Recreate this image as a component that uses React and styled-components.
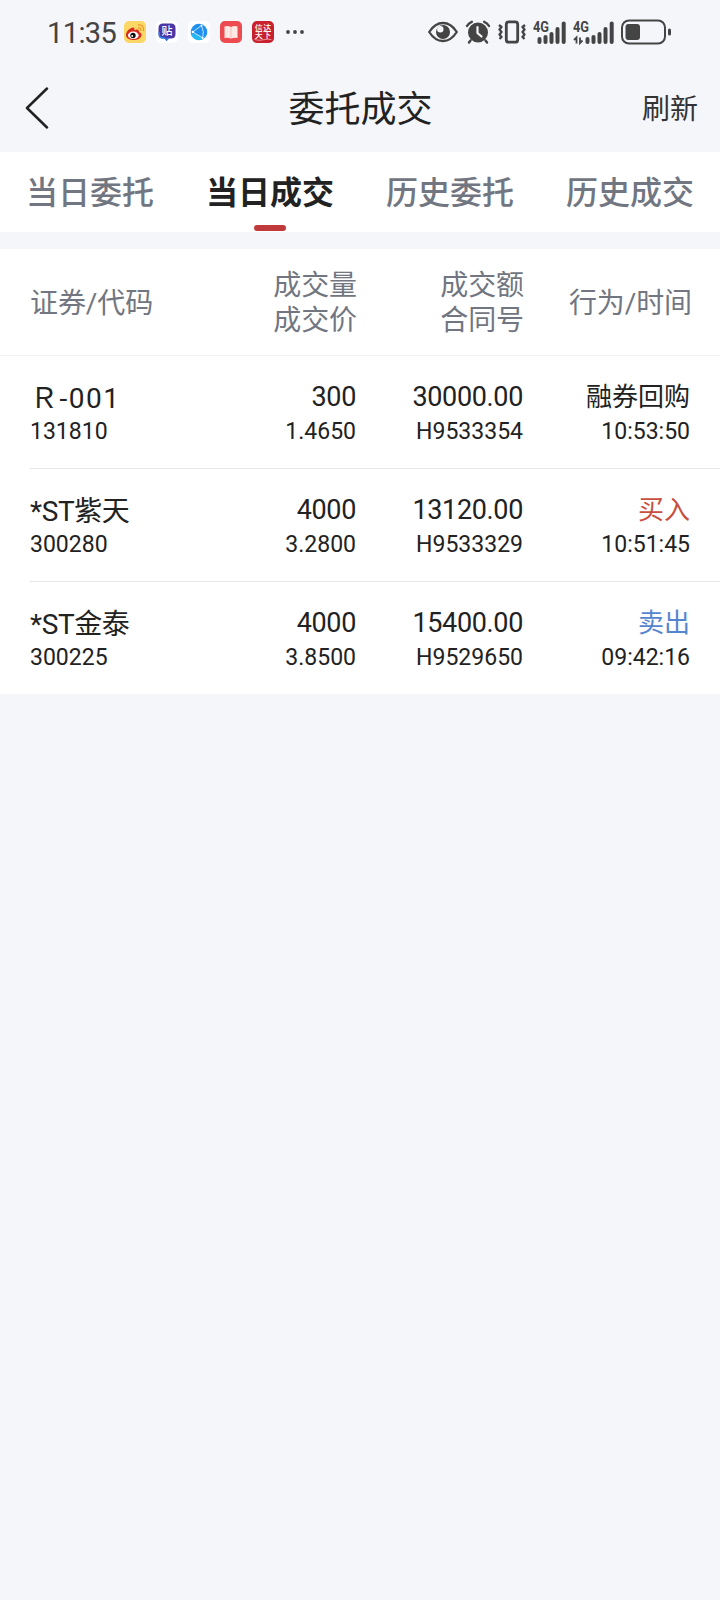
import React, { useState } from 'react';
import styled, { createGlobalStyle } from 'styled-components';


const GlobalStyle = createGlobalStyle`
  * {
    box-sizing: border-box;
  }

  body {
    margin: 0;
    background: #f4f6fa;
    color: #222;
    font-family: Roboto, 'Noto Sans CJK SC', sans-serif;
  }
`;

// Define styled components
const Page = styled.div`
  width: 720px;
  min-height: 1600px;
  background: #f4f6fa;
`;

const StatusBar = styled.div`
  display: flex;
  align-items: center;
  justify-content: space-between;
  height: 64px;
  padding: 0 49px 0 47px;
  color: #444;
`;

const StatusGroup = styled.div`
  display: flex;
  align-items: center;
`;

const Clock = styled.span`
  width: 77px;
  padding-top: 1px;
  font-size: 29px;
  line-height: 64px;
  letter-spacing: -0.6px;
  white-space: nowrap;
`;

const Glyph = styled.svg`
  display: block;
  flex: none;
  margin-right: ${(props) => props.$gap || 0}px;
`;

const NavBar = styled.header`
  display: grid;
  grid-template-columns: 120px 1fr 122px;
  align-items: center;
  height: 88px;
  padding: 0 22px 0 25px;
`;

const BackButton = styled.button`
  display: flex;
  padding: 0;
  border: 0;
  background: none;
`;

const Title = styled.h1`
  height: 88px;
  margin: 0;
  padding-top: 3px;
  font-size: 36px;
  font-weight: 400;
  line-height: 86px;
  text-align: center;
`;

const RefreshButton = styled.button`
  height: 88px;
  padding: 3px 0 0;
  border: 0;
  background: none;
  color: #333;
  font-family: inherit;
  font-size: 28px;
  line-height: 85px;
  text-align: right;
`;

const Tabs = styled.nav`
  display: flex;
  height: 80px;
  margin-bottom: 17px;
  background: #fff;
`;

const Tab = styled.button`
  flex: 1;
  display: flex;
  flex-direction: column;
  align-items: center;
  justify-content: space-between;
  padding: 0 0 1px;
  border: 0;
  background: none;
  color: ${(props) => (props.$active ? '#222' : '#717681')};
  font-family: inherit;
  font-size: 32px;
  font-weight: ${(props) => (props.$active ? 700 : 500)};
  line-height: 73px;

  &::after {
    content: '';
    width: 32px;
    height: 6px;
    border-radius: 3px;
    background: ${(props) => (props.$active ? '#c03a3b' : 'transparent')};
  }
`;

const TabLabel = styled.span`
  height: 73px;
  padding-top: 5px;
`;

const HeadRow = styled.div`
  display: grid;
  grid-template-columns: 160px 167px 167px 1fr;
  align-items: center;
  height: 107px;
  padding: 2px 28px 0 30px;
  border-bottom: 1px solid #f3f3f5;
  background: #fff;
  color: #717681;
  font-size: 28px;
  line-height: 35px;
  letter-spacing: -0.1px;
`;

const List = styled.div`
  background: #fff;
`;

const Row = styled.div`
  display: grid;
  grid-template-columns: 160px 166px 167px 1fr;
  height: ${(props) => (props.$last ? 112 : 113)}px;
  margin-left: 30px;
  padding: 23px 30px 0 0;
  border-bottom: ${(props) => (props.$last ? 'none' : '1px solid #e6e6e8')};
`;

const Cell = styled.div`
  text-align: ${(props) => (props.$left ? 'left' : 'right')};
  white-space: nowrap;
`;

const Name = styled.div`
  font-size: 28px;
  line-height: 39px;
  letter-spacing: ${(props) => props.$spacing}px;
`;

const Amount = styled.div`
  font-size: 27px;
  line-height: 36px;
  letter-spacing: -0.35px;
`;

const Action = styled.div`
  color: ${(props) => props.$color};
  font-size: 26px;
  line-height: 36px;
`;

const Small = styled.div`
  font-size: 23px;
  line-height: ${(props) => (props.$left ? 27 : 34)}px;
`;

const tabs = ['当日委托', '当日成交', '历史委托', '历史成交'];

const actionColors = {
  融券回购: '#222',
  买入: '#c84e3e',
  卖出: '#5386cf',
};

const trades = [
  { name: 'Ｒ-001', spacing: 1.5, code: '131810', volume: '300', price: '1.4650', total: '30000.00', contract: 'H9533354', action: '融券回购', time: '10:53:50' },
  { name: '*ST紫天', spacing: -0.4, code: '300280', volume: '4000', price: '3.2800', total: '13120.00', contract: 'H9533329', action: '买入', time: '10:51:45' },
  { name: '*ST金泰', spacing: -0.4, code: '300225', volume: '4000', price: '3.8500', total: '15400.00', contract: 'H9529650', action: '卖出', time: '09:42:16' },
];

const WeiboIcon = () => (
  <Glyph width="22" height="22" viewBox="0 0 22 22" $gap={10}>
    <rect width="22" height="22" rx="5" fill="#fbd765" />
    <path d="M2 14C2 10 7 6 9.500 6.500C11 7 10 9 10.500 9C12 8.500 15 8 15 10.500C15 11.500 18 11.500 17.500 14.500C17 18 12 19.300 8.500 19C5 18.700 2 17 2 14Z" fill="#d52b1e" />
    <ellipse cx="9.300" cy="14.300" rx="5.300" ry="3.700" fill="#fff" />
    <circle cx="9" cy="14.500" r="2.700" fill="#111" />
    <circle cx="8.200" cy="15" r="0.900" fill="#fff" />
    <path d="M14 7C16 6.600 17.300 8 17 9.800M14 4C18 3.200 20.600 6.500 19.500 10.200" fill="none" stroke="#ee9a2b" strokeWidth="1.300" />
  </Glyph>
);

const TiebaIcon = () => (
  <Glyph width="22" height="22" viewBox="0 0 22 22" $gap={10}>
    <rect width="22" height="22" rx="5" fill="#fff" />
    <path d="M7 2.500H15Q19.500 2.500 19.500 7V13Q19.500 17.500 15 17.500H13L10.500 20L8.500 17.500H7Q2.500 17.500 2.500 13V7Q2.500 2.500 7 2.500Z" fill="#4b35a7" />
    <path d="M3.200 11V13Q3.200 17 7 17H8.800L10.500 19L12.500 17" fill="none" stroke="#2e86e8" strokeWidth="1.400" />
    <text x="11" y="14" fontSize="11" fontWeight="500" textAnchor="middle" fill="#fff">贴</text>
  </Glyph>
);

const BrowserIcon = () => (
  <Glyph width="22" height="22" viewBox="0 0 22 22" $gap={10}>
    <rect width="22" height="22" rx="5" fill="#fff" />
    <circle cx="11" cy="11" r="8.300" fill="#1e90ee" />
    <path d="M3 12.500A8.300 8.300 0 0 0 16 17.500L11 14Z" fill="#25b9f2" />
    <path d="M13.500 4.500L4.800 11L14.700 17M13.500 4.500Q16.500 11 14.700 17" fill="none" stroke="#d5efff" strokeWidth="0.900" />
    <circle cx="4.800" cy="11" r="1.200" fill="#fff" />
    <circle cx="13.500" cy="4.500" r="1" fill="#fff" />
    <circle cx="14.700" cy="17" r="1" fill="#fff" />
  </Glyph>
);

const ReaderIcon = () => (
  <Glyph width="22" height="22" viewBox="0 0 22 22" $gap={10}>
    <rect width="22" height="22" rx="5" fill="#ee4b50" />
    <path d="M4.500 5.500Q8 4.500 11 6Q14 4.500 17.500 5.500V17Q14 16.300 11 17.600Q8 16.300 4.500 17Z" fill="#fde8e3" />
    <path d="M11 6V17.500" stroke="#f3b3b0" strokeWidth="0.800" />
  </Glyph>
);

const CindaIcon = () => (
  <Glyph width="22" height="22" viewBox="0 0 22 22" $gap={12}>
    <rect width="22" height="22" rx="5" fill="#c9202e" />
    <text x="11.300" y="9.500" fontSize="8" fontWeight="500" textAnchor="middle" letterSpacing="0.6" fill="#fff">信达</text>
    <text x="11.300" y="17" fontSize="8" fontWeight="500" textAnchor="middle" letterSpacing="0.6" fill="#fff">天下</text>
    <path d="M2.500 18.500Q7 20 11 18.800T19.500 18.600" fill="none" stroke="#ee9a9a" strokeWidth="0.900" />
  </Glyph>
);

const MoreDots = () => (
  <Glyph width="18" height="22" viewBox="0 0 18 22" fill="#444">
    <circle cx="2" cy="11" r="1.900" />
    <circle cx="9" cy="11" r="1.900" />
    <circle cx="16" cy="11" r="1.900" />
  </Glyph>
);

const EyeIcon = () => (
  <Glyph width="30" height="22" viewBox="0 0 30 22" fill="none" $gap={7}>
    <path d="M1.200 11Q7 2 15 2T28.800 11Q23 20 15 20T1.200 11Z" stroke="#444" strokeWidth="2.300" strokeLinejoin="round" />
    <circle cx="15" cy="11" r="7" fill="#444" />
    <circle cx="12.300" cy="8.200" r="3.200" fill="#f4f6fa" />
  </Glyph>
);

const AlarmIcon = () => (
  <Glyph width="26" height="24" viewBox="0 0 26 24" fill="none" stroke="#444" strokeLinecap="round" $gap={7}>
    <circle cx="13" cy="12.500" r="10" fill="#444" stroke="none" />
    <path d="M2 6Q3.500 3 6.800 1.800M24 6Q22.500 3 19.200 1.800M5.500 20.500L4 22.500M20.500 20.500L22 22.500" strokeWidth="2.400" />
    <path d="M12.500 7V13L16.500 16.500" stroke="#f4f6fa" strokeWidth="2.200" />
  </Glyph>
);

const VibrateIcon = () => (
  <Glyph width="28" height="24" viewBox="0 0 28 24" fill="none" stroke="#444" $gap={6}>
    <rect x="8.300" y="1.800" width="11.400" height="20.400" rx="2.500" strokeWidth="2.800" />
    <path d="M1 5L3.500 7L1.500 9.500L3.500 12L1.500 14.500L3.500 17L1.500 19M27 5L24.500 7L26.500 9.500L24.500 12L26.500 14.500L24.500 17L26.500 19" strokeWidth="2.300" strokeLinejoin="round" />
  </Glyph>
);

const Signal = ({ data, gap }) => (
  <Glyph width={data ? 42 : 34} height="34" viewBox={data ? '-9 -5 42 34' : '-1 -5 34 34'} fill="#444" $gap={gap}>
    <text x={data ? -8 : 0} y="12" fontSize="14.500" fontWeight="700" textLength="16" lengthAdjust="spacingAndGlyphs">4G</text>
    <rect x="4.500" y="17" width="4" height="7" rx="2" />
    <rect x="10.500" y="15" width="4" height="9" rx="2" />
    <rect x="16.500" y="12" width="4" height="12" rx="2" />
    <rect x="22.500" y="7" width="4" height="17" rx="2" />
    <rect x="28.700" y="1.500" width="4" height="22.500" rx="2" />
    {data && <path d="M-4.500 23.500V17.500L-7 20M-1 17.500V23L1.500 20.500" fill="none" stroke="#444" strokeWidth="1.800" />}
  </Glyph>
);

const BatteryIcon = () => (
  <Glyph width="50" height="26" viewBox="0 0 50 26" fill="#444">
    <rect x="1" y="1.500" width="43" height="23" rx="7" fill="none" stroke="#444" strokeWidth="2" />
    <rect x="4.500" y="5" width="14.500" height="16" rx="3" />
    <rect x="47" y="9.500" width="3" height="7" rx="1.500" />
  </Glyph>
);

const BackArrow = () => (
  <Glyph width="24" height="42" viewBox="0 0 24 42">
    <path d="M22 1.500L2 21L22 40.500" fill="none" stroke="#222" strokeWidth="2.500" strokeLinecap="round" strokeLinejoin="round" />
  </Glyph>
);

const TradeRow = ({ trade, last }) => (
  <Row $last={last}>
    <Cell $left>
      <Name $spacing={trade.spacing}>{trade.name}</Name>
      <Small $left>{trade.code}</Small>
    </Cell>
    <Cell>
      <Amount>{trade.volume}</Amount>
      <Small>{trade.price}</Small>
    </Cell>
    <Cell>
      <Amount>{trade.total}</Amount>
      <Small>{trade.contract}</Small>
    </Cell>
    <Cell>
      <Action $color={actionColors[trade.action]}>{trade.action}</Action>
      <Small>{trade.time}</Small>
    </Cell>
  </Row>
);

const App = () => {
  const [activeTab, setActiveTab] = useState('当日成交');

  return (
    <Page>
      <GlobalStyle />
      <StatusBar>
        <StatusGroup>
          <Clock>11:35</Clock>
          <WeiboIcon />
          <TiebaIcon />
          <BrowserIcon />
          <ReaderIcon />
          <CindaIcon />
          <MoreDots />
        </StatusGroup>
        <StatusGroup>
          <EyeIcon />
          <AlarmIcon />
          <VibrateIcon />
          <Signal gap={6} />
          <Signal data gap={7} />
          <BatteryIcon />
        </StatusGroup>
      </StatusBar>
      <NavBar>
        <BackButton><BackArrow /></BackButton>
        <Title>委托成交</Title>
        <RefreshButton>刷新</RefreshButton>
      </NavBar>
      <Tabs>
        {tabs.map((tab) => (
          <Tab key={tab} $active={tab === activeTab} onClick={() => setActiveTab(tab)}>
            <TabLabel>{tab}</TabLabel>
          </Tab>
        ))}
      </Tabs>
      <HeadRow>
        <Cell $left>证券/代码</Cell>
        <Cell>成交量<br />成交价</Cell>
        <Cell>成交额<br />合同号</Cell>
        <Cell>行为/时间</Cell>
      </HeadRow>
      <List>
        {trades.map((trade, i) => (
          <TradeRow key={trade.contract} trade={trade} last={i === trades.length - 1} />
        ))}
      </List>
    </Page>
  );
};

export default App;
